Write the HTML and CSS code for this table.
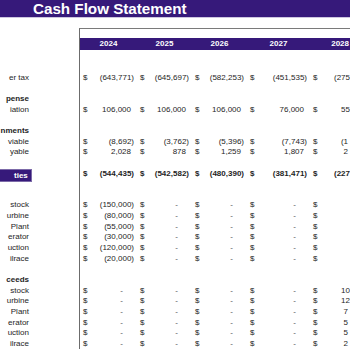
FILE: index.html
```html
<!DOCTYPE html>
<html>
<head>
<meta charset="utf-8">
<link rel="stylesheet" href="styles.css">
</head>
<body>
<header class="title-bar"><h1 class="title">Cash Flow Statement</h1></header>
<main class="sheet">
  <div class="labels">
    <div class="lr"></div>
    <div class="lr"></div>
    <div class="lr">er tax</div>
    <div class="lr"></div>
    <div class="lr b">pense</div>
    <div class="lr">iation</div>
    <div class="lr"></div>
    <div class="lr b">nments</div>
    <div class="lr">viable</div>
    <div class="lr">yable</div>
    <div class="lr"></div>
    <div class="lr"><span class="total-tag">ties</span></div>
    <div class="lr"></div>
    <div class="lr"></div>
    <div class="lr">stock</div>
    <div class="lr">urbine</div>
    <div class="lr">Plant</div>
    <div class="lr">erator</div>
    <div class="lr">uction</div>
    <div class="lr">ilrace</div>
    <div class="lr"></div>
    <div class="lr b">ceeds</div>
    <div class="lr">stock</div>
    <div class="lr">urbine</div>
    <div class="lr">Plant</div>
    <div class="lr">erator</div>
    <div class="lr">uction</div>
    <div class="lr">ilrace</div>
  </div>
  <div class="panel">
    <div class="years">
      <div class="yr">2024</div><div class="yr">2025</div><div class="yr">2026</div><div class="yr">2027</div><div class="yr last">2028</div>
    </div>
    <div class="row"></div>
    <div class="row"></div>
    <div class="row">
      <div class="c"><span>$</span><span class="neg">(643,771)</span></div>
      <div class="c"><span>$</span><span class="neg">(645,697)</span></div>
      <div class="c"><span>$</span><span class="neg">(582,253)</span></div>
      <div class="c"><span>$</span><span class="neg">(451,535)</span></div>
      <div class="c cut"><span>$</span><span>(275</span></div>
    </div>
    <div class="row"></div>
    <div class="row"></div>
    <div class="row">
      <div class="c"><span>$</span><span class="pos">106,000</span></div>
      <div class="c"><span>$</span><span class="pos">106,000</span></div>
      <div class="c"><span>$</span><span class="pos">106,000</span></div>
      <div class="c"><span>$</span><span class="pos">76,000</span></div>
      <div class="c cut"><span>$</span><span>55</span></div>
    </div>
    <div class="row"></div>
    <div class="row"></div>
    <div class="row">
      <div class="c"><span>$</span><span class="neg">(8,692)</span></div>
      <div class="c"><span>$</span><span class="neg">(3,762)</span></div>
      <div class="c"><span>$</span><span class="neg">(5,396)</span></div>
      <div class="c"><span>$</span><span class="neg">(7,743)</span></div>
      <div class="c cut"><span>$</span><span class="tail">(1</span></div>
    </div>
    <div class="row">
      <div class="c"><span>$</span><span class="pos">2,028</span></div>
      <div class="c"><span>$</span><span class="pos">878</span></div>
      <div class="c"><span>$</span><span class="pos">1,259</span></div>
      <div class="c"><span>$</span><span class="pos">1,807</span></div>
      <div class="c cut"><span>$</span><span class="tail">2</span></div>
    </div>
    <div class="row"></div>
    <div class="row b">
      <div class="c"><span>$</span><span class="neg">(544,435)</span></div>
      <div class="c"><span>$</span><span class="neg">(542,582)</span></div>
      <div class="c"><span>$</span><span class="neg">(480,390)</span></div>
      <div class="c"><span>$</span><span class="neg">(381,471)</span></div>
      <div class="c cut"><span>$</span><span>(227</span></div>
    </div>
    <div class="row"></div>
    <div class="row"></div>
    <div class="row">
      <div class="c"><span>$</span><span class="neg">(150,000)</span></div>
      <div class="c"><span>$</span><span class="dash">-</span></div>
      <div class="c"><span>$</span><span class="dash">-</span></div>
      <div class="c"><span>$</span><span class="dash">-</span></div>
      <div class="c cut"><span>$</span><span></span></div>
    </div>
    <div class="row">
      <div class="c"><span>$</span><span class="neg">(80,000)</span></div>
      <div class="c"><span>$</span><span class="dash">-</span></div>
      <div class="c"><span>$</span><span class="dash">-</span></div>
      <div class="c"><span>$</span><span class="dash">-</span></div>
      <div class="c cut"><span>$</span><span></span></div>
    </div>
    <div class="row">
      <div class="c"><span>$</span><span class="neg">(55,000)</span></div>
      <div class="c"><span>$</span><span class="dash">-</span></div>
      <div class="c"><span>$</span><span class="dash">-</span></div>
      <div class="c"><span>$</span><span class="dash">-</span></div>
      <div class="c cut"><span>$</span><span></span></div>
    </div>
    <div class="row">
      <div class="c"><span>$</span><span class="neg">(30,000)</span></div>
      <div class="c"><span>$</span><span class="dash">-</span></div>
      <div class="c"><span>$</span><span class="dash">-</span></div>
      <div class="c"><span>$</span><span class="dash">-</span></div>
      <div class="c cut"><span>$</span><span></span></div>
    </div>
    <div class="row">
      <div class="c"><span>$</span><span class="neg">(120,000)</span></div>
      <div class="c"><span>$</span><span class="dash">-</span></div>
      <div class="c"><span>$</span><span class="dash">-</span></div>
      <div class="c"><span>$</span><span class="dash">-</span></div>
      <div class="c cut"><span>$</span><span></span></div>
    </div>
    <div class="row">
      <div class="c"><span>$</span><span class="neg">(20,000)</span></div>
      <div class="c"><span>$</span><span class="dash">-</span></div>
      <div class="c"><span>$</span><span class="dash">-</span></div>
      <div class="c"><span>$</span><span class="dash">-</span></div>
      <div class="c cut"><span>$</span><span></span></div>
    </div>
    <div class="row"></div>
    <div class="row"></div>
    <div class="row">
      <div class="c"><span>$</span><span class="dash">-</span></div>
      <div class="c"><span>$</span><span class="dash">-</span></div>
      <div class="c"><span>$</span><span class="dash">-</span></div>
      <div class="c"><span>$</span><span class="dash">-</span></div>
      <div class="c cut"><span>$</span><span>10</span></div>
    </div>
    <div class="row">
      <div class="c"><span>$</span><span class="dash">-</span></div>
      <div class="c"><span>$</span><span class="dash">-</span></div>
      <div class="c"><span>$</span><span class="dash">-</span></div>
      <div class="c"><span>$</span><span class="dash">-</span></div>
      <div class="c cut"><span>$</span><span>12</span></div>
    </div>
    <div class="row">
      <div class="c"><span>$</span><span class="dash">-</span></div>
      <div class="c"><span>$</span><span class="dash">-</span></div>
      <div class="c"><span>$</span><span class="dash">-</span></div>
      <div class="c"><span>$</span><span class="dash">-</span></div>
      <div class="c cut"><span>$</span><span class="tail">7</span></div>
    </div>
    <div class="row">
      <div class="c"><span>$</span><span class="dash">-</span></div>
      <div class="c"><span>$</span><span class="dash">-</span></div>
      <div class="c"><span>$</span><span class="dash">-</span></div>
      <div class="c"><span>$</span><span class="dash">-</span></div>
      <div class="c cut"><span>$</span><span class="tail">5</span></div>
    </div>
    <div class="row">
      <div class="c"><span>$</span><span class="dash">-</span></div>
      <div class="c"><span>$</span><span class="dash">-</span></div>
      <div class="c"><span>$</span><span class="dash">-</span></div>
      <div class="c"><span>$</span><span class="dash">-</span></div>
      <div class="c cut"><span>$</span><span class="tail">5</span></div>
    </div>
    <div class="row">
      <div class="c"><span>$</span><span class="dash">-</span></div>
      <div class="c"><span>$</span><span class="dash">-</span></div>
      <div class="c"><span>$</span><span class="dash">-</span></div>
      <div class="c"><span>$</span><span class="dash">-</span></div>
      <div class="c cut"><span>$</span><span class="tail">2</span></div>
    </div>
  </div>
</main>
</body>
</html>
```

FILE: styles.css
```css
html, body {
  margin: 0;
  padding: 0;
  background: #ffffff;
  overflow: hidden;
  width: 350px;
  height: 350px;
}
body {
  font-family: "Liberation Sans", Arial, sans-serif;
  font-size: 8px;
  color: #1e1e1e;
}
.title-bar {
  height: 17px;
  background: #36197a;
  border-bottom: 1px solid #cdc6df;
  display: flex;
  align-items: center;
}
.title {
  margin: 0 0 0 33px;
  font-size: 15.2px;
  font-weight: bold;
  color: #ffffff;
  line-height: 17px;
  white-space: nowrap;
}
.sheet {
  display: flex;
  margin-top: 10px;
  width: 350px;
}
.labels {
  width: 79px;
  flex: none;
  padding-top: 23.5px;
}
.lr {
  height: 10.65px;
  line-height: 10.65px;
  text-align: right;
  padding-right: 50px;
  white-space: nowrap;
}
.lr.b {
  font-weight: bold;
}
.total-tag {
  display: inline-block;
  background: #36197a;
  color: #ffffff;
  font-weight: bold;
  height: 11px;
  line-height: 11px;
  padding: 0 3px 0 14px;
  margin-right: 4px;
  border: 1px solid #7c6aa8;
  border-left: none;
}
.panel {
  flex: none;
  width: 270px;
  border-left: 1px solid #6c6c6c;
  border-top: 1px solid #7a7a7a;
  padding-top: 9px;
}
.years, .row {
  display: grid;
  grid-template-columns: 57px 55px 55px 63px 40px;
}
.years {
  height: 12px;
  margin-bottom: 1.5px;
  background: #36197a;
  color: #ffffff;
  font-weight: bold;
  line-height: 12px;
}
.yr {
  text-align: center;
}
.yr.last {
  text-align: right;
  padding-right: 1px;
}
.row {
  height: 10.65px;
  line-height: 10.65px;
}
.row.b {
  font-weight: bold;
}
.c {
  display: flex;
  justify-content: space-between;
  padding: 0 3px;
  white-space: nowrap;
}
.c.cut {
  padding-right: 0;
}
.pos {
  padding-right: 3px;
}
.tail {
  padding-right: 2px;
}
.dash {
  padding-right: 11px;
  color: #555;
}
```
